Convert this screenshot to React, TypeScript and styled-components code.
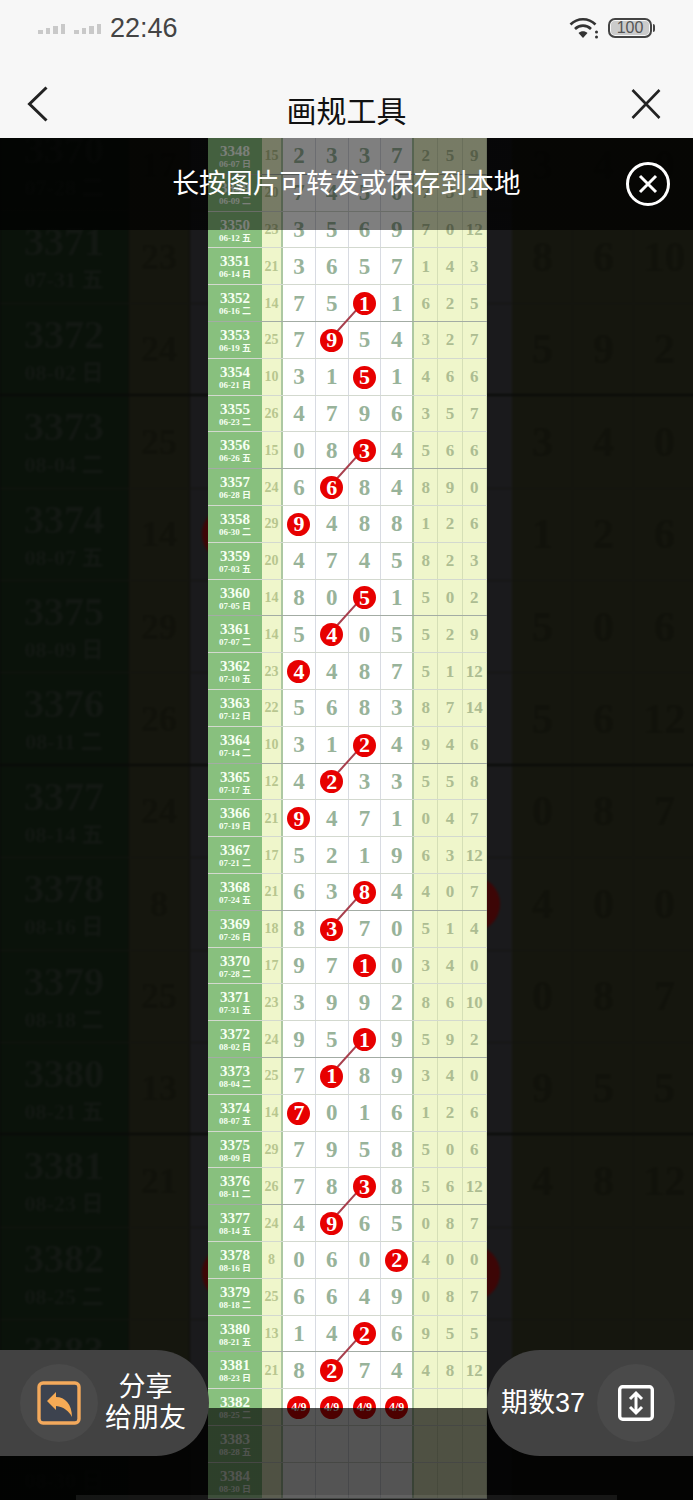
import styled, { createGlobalStyle } from "styled-components";

const SERIF = `"Liberation Serif", "Noto Sans CJK SC", serif`;
const SANS = `"Liberation Sans", "Noto Sans CJK SC", sans-serif`;

const GlobalStyle = createGlobalStyle`
  html, body {
    margin: 0;
    padding: 0;
    background: #000;
  }
`;

const Screen = styled.div`
  display: flex;
  flex-direction: column;
  width: 693px;
  height: 1500px;
  overflow: hidden;
  font-family: ${SANS};
`;

const TopChrome = styled.header`
  flex: none;
  height: 138px;
  background: #f7f7f7;
`;

const StatusBar = styled.div`
  display: flex;
  align-items: center;
  height: 56px;
  padding: 0 38px;
  box-sizing: border-box;
`;

const SignalGroup = styled.div`
  display: flex;
  align-items: flex-end;
  gap: 3px;
  height: 11px;
  margin-right: 9px;
`;

const SignalBar = styled.span<{ $h: number }>`
  width: 4.5px;
  height: ${(p) => p.$h}px;
  background: #c9c9c9;
`;

const Clock = styled.span`
  font-size: 27px;
  color: #444;
`;

const StatusIcons = styled.div`
  display: flex;
  align-items: center;
  gap: 9px;
  margin-left: auto;
`;

const Battery = styled.div`
  position: relative;
  display: flex;
  align-items: center;
  justify-content: center;
  width: 44px;
  height: 20px;
  margin-right: 3px;
  box-sizing: border-box;
  border: 2px solid #444;
  border-radius: 7px;
  background: #cbcbcb;
  box-shadow: inset 0 0 0 1px #f7f7f7;
  font-size: 16px;
  color: #555;
  &::after {
    content: "";
    position: absolute;
    right: -5px;
    top: 4px;
    width: 2px;
    height: 8px;
    background: #444;
    border-radius: 0 2px 2px 0;
  }
`;

const NavBar = styled.nav`
  display: grid;
  grid-template-columns: 1fr auto 1fr;
  align-items: center;
  height: 82px;
  padding: 14px 32px 0;
  box-sizing: border-box;
`;

const NavBack = styled.svg`
  margin-left: -5px;
`;

const NavTitle = styled.h1`
  margin: 15px 0 0;
  font-size: 30px;
  font-weight: 400;
  line-height: 36px;
  color: #111;
`;

const NavClose = styled.svg`
  justify-self: end;
`;

const Stage = styled.main`
  position: relative;
  flex: 1;
  overflow: hidden;
  background: #0a0a0a;
`;

const Backdrop = styled.div`
  margin-top: -19px;
  filter: blur(1.2px);
`;

const BackRow = styled.div<{ $strong: boolean }>`
  display: grid;
  grid-template-columns: 128px 62px repeat(4, 80.5px) repeat(3, 61px);
  height: 92.4px;
  box-sizing: border-box;
  border-bottom: ${(p) => (p.$strong ? "2px solid #090a08" : "1px solid #131410")};
  font-family: ${SERIF};
  font-weight: 700;
`;

const BackDate = styled.div`
  display: flex;
  flex-direction: column;
  align-items: center;
  padding-top: 8px;
  background: #0a120a;
  color: #131813;
  font-size: 40px;
  line-height: 46px;
  span {
    font-size: 22px;
    line-height: 30px;
  }
`;

const BackSum = styled.div`
  display: flex;
  align-items: center;
  justify-content: center;
  background: #15160e;
  color: #11120b;
  font-size: 36px;
  box-shadow: inset 1px 0 0 #0c0d09, inset -1px 0 0 #0c0d09;
`;

const BackNum = styled.div`
  display: flex;
  align-items: center;
  justify-content: center;
  background: #1a1a1c;
  color: #121212;
  font-size: 46px;
`;

const BackTail = styled.div`
  display: flex;
  align-items: center;
  justify-content: center;
  background: #15160e;
  color: #11120b;
  font-size: 42px;
  box-shadow: inset -1px 0 0 #12130d;
`;

const BackBall = styled.span`
  width: 56px;
  height: 56px;
  border-radius: 50%;
  background: #3d0606;
`;

const Sheet = styled.section`
  position: absolute;
  top: 0;
  left: 208px;
  width: 279px;
`;

const SheetRow = styled.div<{ $strong: boolean }>`
  display: grid;
  grid-template-columns: 54px 21px repeat(4, 32.75px) repeat(3, 24.33px);
  height: 36.8px;
  box-sizing: border-box;
  border-bottom: 1px solid ${(p) => (p.$strong ? "#a3aca4" : "#d3d9cf")};
  font-family: ${SERIF};
  font-weight: 700;
`;

const DateCell = styled.div`
  display: flex;
  flex-direction: column;
  align-items: center;
  padding-top: 5px;
  background: #88c07e;
  color: #f6fff2;
  font-size: 15px;
  line-height: 16px;
  span {
    font-size: 9px;
    line-height: 11px;
    white-space: nowrap;
  }
`;

const SumCell = styled.div`
  display: flex;
  align-items: center;
  justify-content: center;
  padding-top: 1px;
  background: #eff6cb;
  color: #b8c68f;
  font-size: 14px;
  border-right: 2px solid #adc8a2;
`;

const NumCell = styled.div<{ $last: boolean }>`
  position: relative;
  display: flex;
  align-items: center;
  justify-content: center;
  padding-top: 1px;
  background: #fff;
  color: #98b39a;
  font-size: 23px;
  border-right: ${(p) => (p.$last ? "2px solid #adc8a2" : "1px solid #d8dbe2")};
`;

const TailCell = styled.div`
  display: flex;
  align-items: center;
  justify-content: center;
  padding-top: 1px;
  background: #eff6cb;
  color: #adbd92;
  font-size: 17px;
  border-right: 1px solid #d5dfb6;
`;

const Ball = styled.span<{ $small: boolean }>`
  position: relative;
  z-index: 2;
  display: flex;
  align-items: center;
  justify-content: center;
  width: 23px;
  height: 23px;
  border-radius: 50%;
  background: #e70000;
  color: #fff;
  font-size: ${(p) => (p.$small ? "12px" : "22px")};
`;

const Connector = styled.i`
  position: absolute;
  z-index: 1;
  left: 50%;
  top: 50%;
  width: 49px;
  height: 2px;
  background: #a8404e;
  transform: rotate(132deg);
  transform-origin: 0 0;
`;

const TipBar = styled.div`
  position: absolute;
  top: 0;
  left: 0;
  right: 0;
  z-index: 3;
  display: flex;
  align-items: center;
  justify-content: center;
  height: 92px;
  padding-bottom: 5px;
  box-sizing: border-box;
  background: linear-gradient(
    to right,
    rgba(0, 0, 0, 0.72) 208px,
    rgba(0, 0, 0, 0.5) 208px,
    rgba(0, 0, 0, 0.5) 487px,
    rgba(0, 0, 0, 0.72) 487px
  );
  color: #fff;
  font-size: 26.8px;
`;

const TipClose = styled.svg`
  position: absolute;
  right: 22px;
  top: 23px;
`;

const BottomDim = styled.div`
  position: absolute;
  left: 0;
  right: 0;
  bottom: 0;
  z-index: 3;
  display: flex;
  flex-direction: column;
  justify-content: flex-end;
  height: 92px;
  padding: 0 76px;
  box-sizing: border-box;
  background: linear-gradient(
    to right,
    rgba(0, 0, 0, 0.82) 208px,
    rgba(0, 0, 0, 0.67) 208px,
    rgba(0, 0, 0, 0.67) 487px,
    rgba(0, 0, 0, 0.82) 487px
  );
`;

const PageEdge = styled.div`
  height: 5px;
  background: rgba(255, 255, 255, 0.08);
`;

const Pill = styled.div<{ $side: "left" | "right" }>`
  position: absolute;
  z-index: 4;
  top: 1212px;
  display: flex;
  align-items: center;
  height: 106px;
  box-sizing: border-box;
  background: #424242;
  color: #fff;
  font-size: 27px;
  ${(p) =>
    p.$side === "left"
      ? `left: 0; width: 209px; padding-left: 20px; gap: 7px; border-radius: 0 53px 53px 0;`
      : `right: 0; width: 206px; padding-left: 14px; gap: 12px; border-radius: 53px 0 0 53px;`}
`;

const IconDisc = styled.div`
  flex: none;
  display: flex;
  align-items: center;
  justify-content: center;
  width: 78px;
  height: 78px;
  border-radius: 50%;
  background: #4a4a4a;
`;

const PillLabel = styled.div`
  line-height: 31px;
  text-align: center;
  white-space: nowrap;
`;

type Row = [number, string, string, string, number, string];

// no, date, sum, four numbers, which one is drawn as a ball, last three
const ROWS: Row[] = [
  [3348, "06-07 日", "15", "2337", -1, "2 5 9"],
  [3349, "06-09 二", "20", "7450", -1, "7 3 1"],
  [3350, "06-12 五", "23", "3569", -1, "7 0 12"],
  [3351, "06-14 日", "21", "3657", -1, "1 4 3"],
  [3352, "06-16 二", "14", "7511", 2, "6 2 5"],
  [3353, "06-19 五", "25", "7954", 1, "3 2 7"],
  [3354, "06-21 日", "10", "3151", 2, "4 6 6"],
  [3355, "06-23 二", "26", "4796", -1, "3 5 7"],
  [3356, "06-26 五", "15", "0834", 2, "5 6 6"],
  [3357, "06-28 日", "24", "6684", 1, "8 9 0"],
  [3358, "06-30 二", "29", "9488", 0, "1 2 6"],
  [3359, "07-03 五", "20", "4745", -1, "8 2 3"],
  [3360, "07-05 日", "14", "8051", 2, "5 0 2"],
  [3361, "07-07 二", "14", "5405", 1, "5 2 9"],
  [3362, "07-10 五", "23", "4487", 0, "5 1 12"],
  [3363, "07-12 日", "22", "5683", -1, "8 7 14"],
  [3364, "07-14 二", "10", "3124", 2, "9 4 6"],
  [3365, "07-17 五", "12", "4233", 1, "5 5 8"],
  [3366, "07-19 日", "21", "9471", 0, "0 4 7"],
  [3367, "07-21 二", "17", "5219", -1, "6 3 12"],
  [3368, "07-24 五", "21", "6384", 2, "4 0 7"],
  [3369, "07-26 日", "18", "8370", 1, "5 1 4"],
  [3370, "07-28 二", "17", "9710", 2, "3 4 0"],
  [3371, "07-31 五", "23", "3992", -1, "8 6 10"],
  [3372, "08-02 日", "24", "9519", 2, "5 9 2"],
  [3373, "08-04 二", "25", "7189", 1, "3 4 0"],
  [3374, "08-07 五", "14", "7016", 0, "1 2 6"],
  [3375, "08-09 日", "29", "7958", -1, "5 0 6"],
  [3376, "08-11 二", "26", "7838", 2, "5 6 12"],
  [3377, "08-14 五", "24", "4965", 1, "0 8 7"],
  [3378, "08-16 日", "8", "0602", 3, "4 0 0"],
  [3379, "08-18 二", "25", "6649", -1, "0 8 7"],
  [3380, "08-21 五", "13", "1426", 2, "9 5 5"],
  [3381, "08-23 日", "21", "8274", 1, "4 8 12"],
  [3382, "08-25 二", "", "????", 9, "  "],
  [3383, "08-28 五", "", "", -1, "  "],
  [3384, "08-30 日", "", "", -1, "  "],
];

const cellsOf = (row: Row) => {
  const [, , , digits] = row;
  return [0, 1, 2, 3].map((i) => digits[i] ?? "");
};

const isBall = (row: Row, i: number) => row[4] === i || row[4] === 9;
const ballText = (row: Row, value: string) => (row[4] === 9 ? "4/9" : value);

const App = () => {
  return (
    <Screen>
      <GlobalStyle />
      <TopChrome>
        <StatusBar>
          <SignalGroup>
            {[4, 6, 8, 10].map((h) => (
              <SignalBar key={h} $h={h} />
            ))}
          </SignalGroup>
          <SignalGroup>
            {[4, 6, 8, 10].map((h) => (
              <SignalBar key={h} $h={h} />
            ))}
          </SignalGroup>
          <Clock>22:46</Clock>
          <StatusIcons>
            <svg width="30" height="22" viewBox="0 0 30 22" fill="none">
              <path d="M1.5 7.5C8.5 .5 19.5 .5 26.5 7.5" stroke="#333" strokeWidth="2.6" />
              <path d="M6 12C10.5 7.5 17.5 7.5 22 12" stroke="#333" strokeWidth="2.6" />
              <path d="M9.5 16C12 13.6 16 13.6 18.5 16L14 21Z" fill="#333" />
              <circle cx="27.5" cy="15" r="1.5" fill="#333" />
              <circle cx="27.5" cy="20" r="1.5" fill="#333" />
            </svg>
            <Battery>100</Battery>
          </StatusIcons>
        </StatusBar>
        <NavBar>
          <NavBack width="21" height="36" viewBox="0 0 21 36" fill="none">
            <path d="M19.5 1.5L2.5 18L19.5 34.5" stroke="#222" strokeWidth="3" />
          </NavBack>
          <NavTitle>画规工具</NavTitle>
          <NavClose width="30" height="30" viewBox="0 0 30 30" fill="none">
            <path d="M1.5 1L28.5 29M28.5 1L1.5 29" stroke="#222" strokeWidth="2.6" />
          </NavClose>
        </NavBar>
      </TopChrome>

      <Stage>
        <Backdrop>
          {ROWS.slice(22).map((row) => (
            <BackRow key={row[0]} $strong={row[0] % 4 === 0}>
              <BackDate>
                {row[0]}
                <span>{row[1]}</span>
              </BackDate>
              <BackSum>{row[2]}</BackSum>
              {cellsOf(row).map((value, i) => (
                <BackNum key={i}>{isBall(row, i) ? <BackBall /> : value}</BackNum>
              ))}
              {row[5].split(" ").map((value, i) => (
                <BackTail key={i}>{value}</BackTail>
              ))}
            </BackRow>
          ))}
        </Backdrop>

        <Sheet>
          {ROWS.map((row) => (
            <SheetRow key={row[0]} $strong={row[0] % 4 === 0}>
              <DateCell>
                {row[0]}
                <span>{row[1]}</span>
              </DateCell>
              <SumCell>{row[2]}</SumCell>
              {cellsOf(row).map((value, i) => (
                <NumCell key={i} $last={i === 3}>
                  {isBall(row, i) ? (
                    <>
                      {row[0] % 4 === 0 && <Connector />}
                      <Ball $small={row[4] === 9}>{ballText(row, value)}</Ball>
                    </>
                  ) : (
                    value
                  )}
                </NumCell>
              ))}
              {row[5].split(" ").map((value, i) => (
                <TailCell key={i}>{value}</TailCell>
              ))}
            </SheetRow>
          ))}
        </Sheet>

        <TipBar>
          长按图片可转发或保存到本地
          <TipClose width="46" height="46" viewBox="0 0 46 46" fill="none">
            <circle cx="23" cy="23" r="20.5" stroke="#fff" strokeWidth="3" />
            <path d="M15 15L31 31M31 15L15 31" stroke="#fff" strokeWidth="3" />
          </TipClose>
        </TipBar>

        <BottomDim>
          <PageEdge />
        </BottomDim>

        <Pill $side="left">
          <IconDisc>
            <svg width="44" height="44" viewBox="0 0 44 44" fill="none">
              <rect x="2" y="2" width="40" height="40" rx="4" fill="#3d434f" stroke="#f3a95c" strokeWidth="3.4" />
              <path d="M10 20L19 11V16C28 16 35 23 35 36C32 30 27 26 19 25V29Z" fill="#f7ab55" />
            </svg>
          </IconDisc>
          <PillLabel>
            分享
            <br />
            给朋友
          </PillLabel>
        </Pill>

        <Pill $side="right">
          <PillLabel>期数37</PillLabel>
          <IconDisc>
            <svg width="36" height="36" viewBox="0 0 36 36" fill="none">
              <rect x="1.7" y="1.7" width="32.6" height="32.6" rx="3" stroke="#fff" strokeWidth="3.4" />
              <path d="M18 9V27M12 14L18 8L24 14M12 22L18 28L24 22" stroke="#fff" strokeWidth="3" />
            </svg>
          </IconDisc>
        </Pill>
      </Stage>
    </Screen>
  );
};

export default App;
